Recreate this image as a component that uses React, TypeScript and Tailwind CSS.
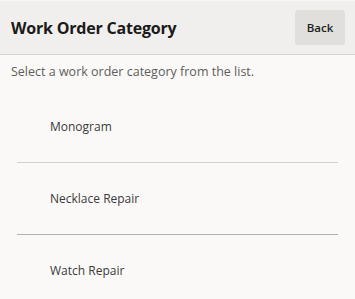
export default function App() {
  const items = ["Monogram", "Necklace Repair", "Watch Repair"];
  return (
    <div className="w-[355px] h-[299px] overflow-hidden bg-[#faf9f8]" style={{ fontFamily: '"Open Sans", "Noto Sans", sans-serif' }}>
      <div className="h-[55px] bg-[#f0efee] border-t border-t-[#f7f6f5] border-b border-b-[#d6d4d2] flex items-center justify-between pl-[11px] pr-[10px]">
        <div className="text-[16px] font-bold text-[#1b1a19] tracking-[-0.2px]">Work Order Category</div>
        <button className="w-[50px] h-[35px] rounded-[3px] bg-[#e1dfdc] text-[11.5px] text-[#201f1e] font-semibold">Back</button>
      </div>
      <div className="h-[36px] flex items-center pl-[11px] text-[12.5px] text-[#605e5c] pb-[1px]">
        Select a work order category from the list.
      </div>
      <div className="mx-[17px]">
        {items.map((t, i) => (
          <div
            key={t}
            className={
              "h-[72px] flex items-center pl-[33px] text-[12px] text-[#3b3a39] " +
              (i === 0 ? "border-b border-[#d2d0ce]" : i === 1 ? "border-b border-[#b3b0ad]" : "")
            }
          >
            {t}
          </div>
        ))}
      </div>
    </div>
  );
}
